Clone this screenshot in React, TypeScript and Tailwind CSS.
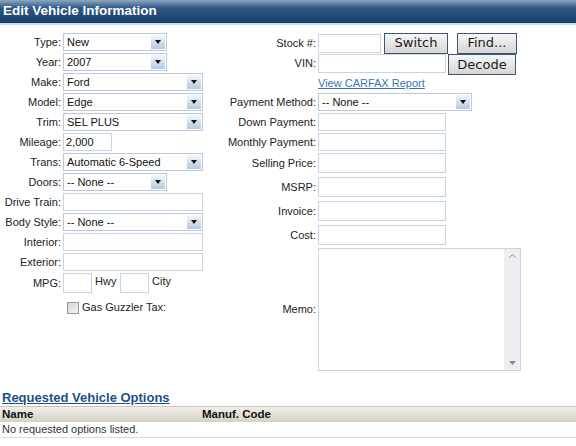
import React from "react";

const SANS = "font-['Liberation_Sans',Arial,sans-serif]";

function Arrow() {
  return (
    <div className="m-[1px] w-[14px] flex items-center justify-center bg-linear-to-b from-[#f4f7fb] to-[#b3c8e1]">
      <svg width="6" height="4" viewBox="0 0 6 4">
        <polygon points="0,0 6,0 3,4" fill="#111" />
      </svg>
    </div>
  );
}

function Select({ w, value }: { w: string; value: string }) {
  return (
    <div className={`flex h-[18px] border border-[#b9c8da] bg-white ${w}`}>
      <div className="flex-1 pl-[3px] text-[11px] leading-[16px] text-[#111] whitespace-nowrap overflow-hidden">{value}</div>
      <Arrow />
    </div>
  );
}

function Input({ w, h = "h-[18px]", value = "" }: { w: string; h?: string; value?: string }) {
  return (
    <div className={`border border-[#c6d4e3] bg-white pl-[2px] text-[11px] text-[#111] flex items-center ${w} ${h}`}>
      {value}
    </div>
  );
}

function LRow({ label, children, h = "h-[20px]" }: { label: string; children: React.ReactNode; h?: string }) {
  return (
    <div className={`flex items-center ${h}`}>
      <div className="w-[61px] text-right text-[11px] text-[#222] whitespace-nowrap">{label}</div>
      <div className="ml-[2px] flex items-center">{children}</div>
    </div>
  );
}

function RRow({ label, children, h = "h-[20px]", cls = "" }: { label: string; children: React.ReactNode; h?: string; cls?: string }) {
  return (
    <div className={`flex items-center ${h} ${cls}`}>
      <div className="w-[106px] text-right text-[11px] text-[#222] whitespace-nowrap">{label}</div>
      <div className="ml-[2px] flex items-center">{children}</div>
    </div>
  );
}

function Btn({ w, label }: { w: string; label: string }) {
  return (
    <div className={`h-[21px] border border-[#3d5773] bg-linear-to-b from-[#f7f7f7] to-[#d5d5d5] flex items-center justify-center font-['DejaVu_Sans',Verdana,sans-serif] text-[13px] text-[#1a1a1a] ${w}`}>
      {label}
    </div>
  );
}

export default function App() {
  return (
    <div className={`w-[576px] h-[446px] bg-white overflow-hidden ${SANS}`}>
      <div className="h-[23px] bg-linear-to-b from-[#8ea7c1] via-[#2c5782] via-35% to-[#17416c] flex items-center pl-[3px]">
        <span className="text-white font-bold text-[13.5px]">Edit Vehicle Information</span>
      </div>
      <div className="h-[2px] bg-[#c9d7e6]" />

      <div className="flex pt-[7px]">
        <div className="w-[210px] flex flex-col">
          <LRow label="Type:"><Select w="w-[104px]" value="New" /></LRow>
          <LRow label="Year:"><Select w="w-[104px]" value="2007" /></LRow>
          <LRow label="Make:"><Select w="w-[140px]" value="Ford" /></LRow>
          <LRow label="Model:"><Select w="w-[140px]" value="Edge" /></LRow>
          <LRow label="Trim:"><Select w="w-[140px]" value="SEL PLUS" /></LRow>
          <LRow label="Mileage:"><Input w="w-[49px]" value="2,000" /></LRow>
          <LRow label="Trans:"><Select w="w-[140px]" value="Automatic 6-Speed" /></LRow>
          <LRow label="Doors:"><Select w="w-[104px]" value="-- None --" /></LRow>
          <LRow label="Drive Train:"><Input w="w-[140px]" /></LRow>
          <LRow label="Body Style:"><Select w="w-[140px]" value="-- None --" /></LRow>
          <LRow label="Interior:"><Input w="w-[140px]" /></LRow>
          <LRow label="Exterior:"><Input w="w-[140px]" /></LRow>
          <LRow label="MPG:" h="h-[22px]">
            <Input w="w-[29px]" h="h-[20px]" />
            <span className="ml-[3px] w-[25px] text-[11px] text-[#222] self-start">Hwy</span>
            <Input w="w-[29px]" h="h-[20px]" />
            <span className="ml-[3px] text-[11px] text-[#222] self-start">City</span>
          </LRow>
          <div className="flex items-center h-[27px] pl-[67px]">
            <div className="w-[12px] h-[12px] border border-[#9a9a9a] bg-linear-to-br from-[#d2d2d2] to-[#f7f7f7]" />
            <span className="ml-[3px] text-[11px] text-[#222]">Gas Guzzler Tax:</span>
          </div>
        </div>

        <div className="flex flex-col">
          <RRow label="Stock #:" h="h-[22px]">
            <Input w="w-[63px]" h="h-[19px]" />
            <div className="ml-[3px]"><Btn w="w-[64px]" label="Switch" /></div>
            <div className="ml-[9px]"><Btn w="w-[60px]" label="Find..." /></div>
          </RRow>
          <div className="flex h-[21px]">
            <div className="w-[106px] text-right text-[11px] text-[#222] leading-[19px]">VIN:</div>
            <div className="ml-[2px] flex items-start">
              <Input w="w-[128px]" h="h-[19px]" />
              <div className="ml-[2px]"><Btn w="w-[68px]" label="Decode" /></div>
            </div>
          </div>
          <div className="h-[17px] pl-[108px] flex items-center">
            <span className="text-[11px] text-[#3b74b0] underline">View CARFAX Report</span>
          </div>
          <RRow label="Payment Method:"><Select w="w-[154px]" value="-- None --" /></RRow>
          <RRow label="Down Payment:"><Input w="w-[128px]" /></RRow>
          <RRow label="Monthly Payment:"><Input w="w-[128px]" /></RRow>
          <RRow label="Selling Price:" cls="mt-[1px]"><Input w="w-[128px]" h="h-[20px]" /></RRow>
          <RRow label="MSRP:" cls="mt-[4px]"><Input w="w-[128px]" h="h-[20px]" /></RRow>
          <RRow label="Invoice:" cls="mt-[4px]"><Input w="w-[128px]" h="h-[20px]" /></RRow>
          <RRow label="Cost:" cls="mt-[4px]"><Input w="w-[128px]" h="h-[20px]" /></RRow>
          <RRow label="Memo:" h="h-[123px]" cls="mt-[3px]">
            <div className="w-[203px] h-[123px] border border-[#c6d4e3] bg-white flex justify-end">
              <div className="w-[16px] h-full bg-[#eceef2] flex flex-col items-center justify-between py-[5px]">
                <svg width="7" height="4" viewBox="0 0 7 4">
                  <polyline points="0.5,3.5 3.5,0.5 6.5,3.5" fill="none" stroke="#888" strokeWidth="1" />
                </svg>
                <svg width="7" height="4" viewBox="0 0 7 4">
                  <polygon points="0,0 7,0 3.5,4" fill="#888" />
                </svg>
              </div>
            </div>
          </RRow>
        </div>
      </div>

      <div className="mt-[19px] pl-[2px] leading-[14px]">
        <span className="text-[13px] font-bold text-[#1f4f8a] underline">Requested Vehicle Options</span>
      </div>
      <div className="mt-[1px] h-[16px] flex items-center border-t border-[#cbc6bb] bg-linear-to-b from-[#f1eee8] to-[#d6d1c7] text-[11.5px] font-bold text-[#111]">
        <div className="w-[202px] pl-[2px]">Name</div>
        <div>Manuf. Code</div>
      </div>
      <div className="h-[16px] flex items-center border-b border-[#d9d9d9] pl-[2px] text-[11px] text-[#333]">
        No requested options listed.
      </div>
    </div>
  );
}
